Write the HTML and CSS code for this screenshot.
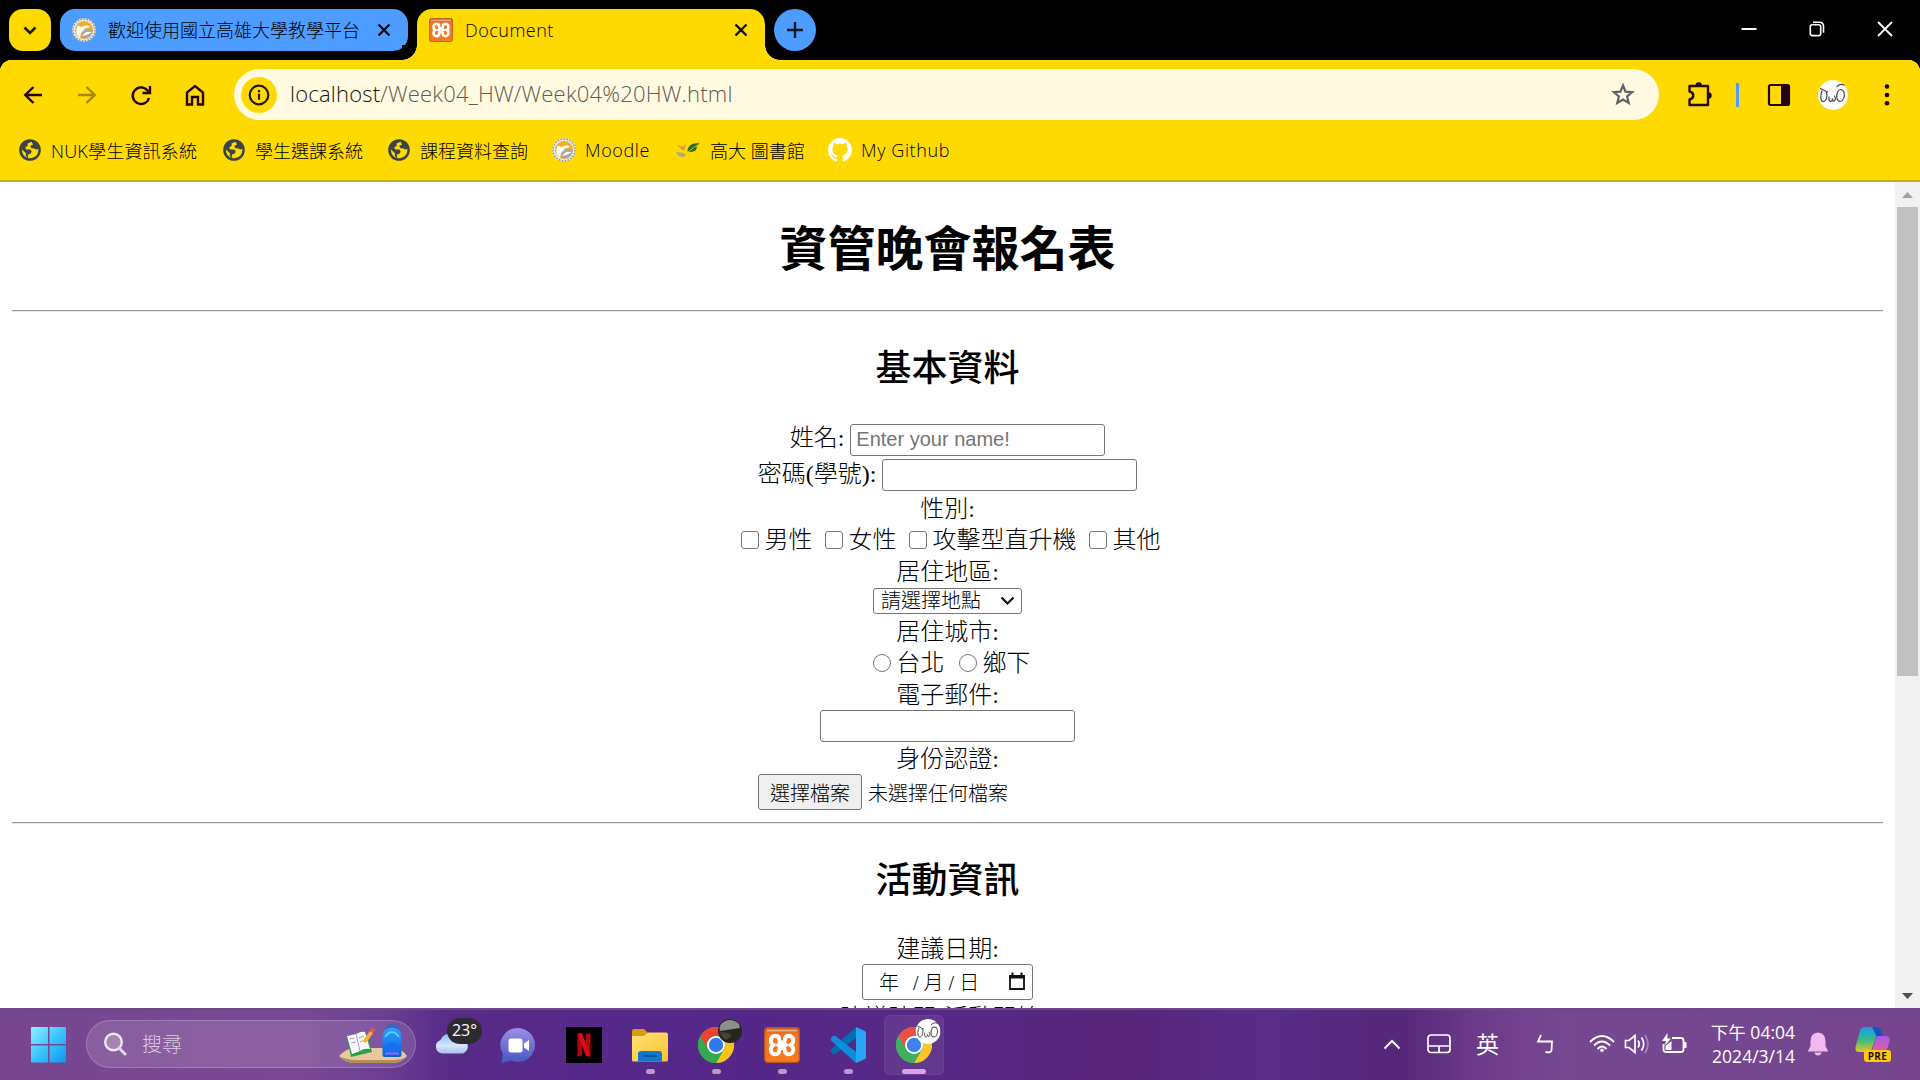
FILE: index.html
```html
<!DOCTYPE html>
<html lang="zh-Hant">
<head>
<meta charset="utf-8">
<title>Document</title>
<link rel="stylesheet" href="styles.css">
</head>
<body>
<svg class="defs" width="0" height="0">
  <defs>
    <linearGradient id="win" x1="0" y1="0" x2="1" y2="1"><stop offset="0" stop-color="#8ff0ff"/><stop offset=".5" stop-color="#3cc4fa"/><stop offset="1" stop-color="#0e95f5"/></linearGradient>
    <linearGradient id="fold" x1="0" y1="0" x2="1" y2="1"><stop offset="0" stop-color="#ffe27a"/><stop offset="1" stop-color="#fcc22c"/></linearGradient>
    <linearGradient id="cloud" x1="0" y1="0" x2="0" y2="1"><stop offset="0" stop-color="#8fbdf0"/><stop offset=".6" stop-color="#d4e6fb"/><stop offset="1" stop-color="#a5c3ee"/></linearGradient>
    <linearGradient id="chat" x1="0" y1="0" x2="0" y2="1"><stop offset="0" stop-color="#9a8fe6"/><stop offset="1" stop-color="#4556c4"/></linearGradient>
    <linearGradient id="orange" x1="0" y1="0" x2="0" y2="1"><stop offset="0" stop-color="#c65c1b"/><stop offset=".2" stop-color="#f37623"/><stop offset="1" stop-color="#f77a20"/></linearGradient>
    <linearGradient id="copA" x1="0" y1="0" x2="0" y2="1"><stop offset="0" stop-color="#1a9cf0"/><stop offset=".5" stop-color="#35b98a"/><stop offset="1" stop-color="#e6c81c"/></linearGradient>
    <linearGradient id="copB" x1="0" y1="0" x2="0" y2="1"><stop offset="0" stop-color="#a458f0"/><stop offset="1" stop-color="#f7607a"/></linearGradient>
    <linearGradient id="bag" x1="0" y1="0" x2="0" y2="1"><stop offset="0" stop-color="#2aa3ff"/><stop offset="1" stop-color="#0560d8"/></linearGradient>
    <symbol id="globe" viewBox="0 0 22 22"><circle cx="11" cy="11" r="10.8" fill="#3c4449"/><path d="M12.500 2.800l-4 1.700.3 2.300-2.500 1.500.8 2.200h4.300l1.300 2.200-1 1.800-3 1.200.5 3.300c4 1 8-1.300 9.700-5l.6-4-2.500.6-2-1.400-2.300.2-1.500-2.500 2.800-1.300z" fill="#ffda00"/><path d="M3 10.500l4 3.800-.3 2.500 2 2.200c-3.500-1-5.800-4.500-5.700-8.500z" fill="#ffda00"/></symbol>
    <symbol id="xampp" viewBox="0 0 36 36"><rect x=".7" y=".7" width="34.600" height="34.600" rx="3" fill="url(#orange)" stroke="#b75a22" stroke-width="1.300"/><path d="M3 2.500h30v2H3z" fill="#f5a875"/><path d="M14 18h8M10 18a4.500 4.500 0 0 1-3.200-4.500 4.400 4.400 0 0 1 4.400-4.700c3 0 4 2 4 4.200 0 1.500 1 2.500 2.800 2.500s2.800-1 2.800-2.500c0-2.200 1-4.200 4-4.200a4.400 4.400 0 0 1 4.400 4.700A4.500 4.500 0 0 1 26 18a4.500 4.500 0 0 1 3.200 4.500 4.400 4.400 0 0 1-4.400 4.700c-3 0-4-2-4-3.700 0-1.500-1-2.500-2.800-2.500s-2.800 1-2.800 2.500c0 1.700-1 3.700-4 3.700a4.400 4.400 0 0 1-4.400-4.700A4.500 4.500 0 0 1 10 18z" fill="none" stroke="#fff" stroke-width="3.900" stroke-linecap="round" stroke-linejoin="round"/></symbol>
    <symbol id="crest" viewBox="0 0 24 24"><circle cx="12" cy="12" r="11.800" fill="#e9e6df"/><circle cx="12" cy="12" r="11" fill="none" stroke="#909090" stroke-width="1.400" stroke-dasharray="1.500 1.500"/><circle cx="12" cy="12" r="9" fill="#f1ae28"/><path d="M6 7.500l3 1.500 6-2 3 2-5 1.500-4 4.500-1 5c-4-3-5-8-2-12.500z" fill="#fff"/><path d="M20.500 12c-3-2-8-1-10 2-1 2-1 3-.5 5.500 5 3 10-1 10.500-7.500z" fill="#a8a8a8"/><path d="M19.500 14.500c-4-2-7 0-9 3.500 3-.5 5-1.500 9-3.500z" fill="#fff"/></symbol>
    <symbol id="chrome" viewBox="0 0 36 36"><circle cx="18" cy="18" r="18" fill="#34a853"/><path d="M2.400 9A18 18 0 0 1 33.600 9H18a9 9 0 0 0-7.800 13.500z" fill="#ea4335"/><path d="M33.600 9A18 18 0 0 1 18 36l7.800-13.500A9 9 0 0 0 18 9z" fill="#fbc116"/><path d="M18 36A18 18 0 0 1 2.400 9l7.800 13.500A9 9 0 0 0 25.800 22.500z" fill="#34a853"/><circle cx="18" cy="18" r="9" fill="#fff"/><circle cx="18" cy="18" r="7.200" fill="#3079ee"/></symbol>
    <symbol id="face" viewBox="0 0 30 30"><circle cx="15" cy="15" r="15" fill="#fdfdfd"/><g fill="none" stroke="#444" stroke-width="1.200" stroke-linecap="round"><path d="M2.500 8.500l7 3.500M4 11c-2 5-1.500 10 1 10.500s5-4 3.500-9.500M11 17c-.5 3 .5 5 2 4.500s1.500-3 1.500-3 0 3 1.500 2.500 2-3 .5-5"/><ellipse cx="22.500" cy="15.500" rx="3.800" ry="6" transform="rotate(6 22.500 15.500)"/><path d="M19 6.500c2-2 5-2.500 7-1.500"/></g></symbol>
  </defs>
</svg>

<header class="tabstrip">
  <button class="tab-search"><svg width="42" height="42" viewBox="0 0 42 42"><path d="M15.500 18.500l5.500 5.500 5.500-5.500" fill="none" stroke="#241a00" stroke-width="2.600"/></svg></button>
  <div class="tab tab-idle">
    <svg width="24" height="24"><use href="#crest"/></svg>
    <span class="tab-title">歡迎使用國立高雄大學教學平台</span>
    <svg class="x" width="14" height="14" viewBox="0 0 14 14"><path d="M1.500 1.500l11 11m0-11l-11 11"/></svg>
  </div>
  <div class="tab tab-active">
    <svg width="24" height="24"><use href="#xampp"/></svg>
    <span class="tab-title">Document</span>
    <svg class="x" width="14" height="14" viewBox="0 0 14 14"><path d="M1.500 1.500l11 11m0-11l-11 11"/></svg>
  </div>
  <button class="new-tab"><svg width="42" height="42" viewBox="0 0 42 42"><path d="M21 13v16M13 21h16" stroke="#101820" stroke-width="2.400"/></svg></button>
  <div class="window-controls">
    <svg width="18" height="18" viewBox="0 0 18 18"><path d="M1.500 9h15" stroke="#fff" stroke-width="2"/></svg>
    <svg width="18" height="18" viewBox="0 0 18 18" fill="none" stroke="#fff" stroke-width="1.600"><rect x="2.300" y="4.800" width="10.400" height="10.800" rx="2"/><path d="M5 2.300h7a3.500 3.500 0 0 1 3.500 3.500v7"/></svg>
    <svg width="18" height="18" viewBox="0 0 18 18"><path d="M2 2l14 14m0-14L2 16" stroke="#fff" stroke-width="1.800"/></svg>
  </div>
</header>

<nav class="toolbar">
  <div class="nav-icons">
    <svg viewBox="0 0 24 24"><path d="M21 12H4m8.500-8L4.300 12l8.200 8"/></svg>
    <svg class="dim" viewBox="0 0 24 24"><path d="M3 12h17m-8.500-8l8.200 8-8.200 8"/></svg>
    <svg viewBox="0 0 24 24"><path d="M20 15a8.300 8.300 0 1 1-1.500-7.500l2 2M21 3v7h-7.500"/></svg>
    <svg viewBox="0 0 24 24"><path d="M4 21.500V9.500L12 3l8 6.500v12h-5v-7.500H9v7.500z"/></svg>
  </div>
  <div class="omnibox">
    <span class="site-info"><svg width="22" height="22" viewBox="0 0 22 22"><circle cx="11" cy="11" r="9.300" fill="none" stroke="#241a00" stroke-width="2.200"/><path d="M11 9.800v6M11 6v2.200" stroke="#241a00" stroke-width="2.200"/></svg></span>
    <span class="url"><b>localhost</b>/Week04_HW/Week04%20HW.html</span>
    <svg class="star" width="26" height="26" viewBox="0 0 26 26"><path d="M13 3.500l2.500 6.200 6.700.5-5.100 4.300 1.600 6.500L13 17.500 7.300 21l1.600-6.500-5.100-4.300 6.700-.5z" fill="none" stroke="#5f6368" stroke-width="2.200"/></svg>
  </div>
  <div class="actions">
    <svg class="puzzle" width="26" height="26" viewBox="0 0 26 26"><path d="M3.500 4h18.500v19H3.500v-5.500c5-1 5-7 0-8z" fill="none" stroke="#240a12" stroke-width="2.400" stroke-linejoin="round"/><path d="M9.500 3.500a3.200 3.200 0 0 1 6.400 0zM22.500 10.300a3.200 3.200 0 0 1 0 6.400z" fill="#240a12"/></svg>
    <i class="divider"></i>
    <svg class="panel" width="24" height="24" viewBox="0 0 24 24"><rect x="2" y="2" width="20" height="20" rx="1.500" fill="none" stroke="#240016" stroke-width="2.200"/><path d="M14 2h8v20h-8z" fill="#240016"/></svg>
    <svg class="profile" width="30" height="30"><use href="#face"/></svg>
    <svg class="more" width="8" height="24" viewBox="0 0 8 24"><circle cx="4" cy="3.500" r="2.300" fill="#240016"/><circle cx="4" cy="12" r="2.300" fill="#240016"/><circle cx="4" cy="20.300" r="2.300" fill="#240016"/></svg>
  </div>
</nav>

<nav class="bookmarks">
  <a class="bm w204"><svg width="22" height="22"><use href="#globe"/></svg><span class="nuk">NUK學生資訊系統</span></a>
  <a class="bm w165"><svg width="22" height="22"><use href="#globe"/></svg><span>學生選課系統</span></a>
  <a class="bm w164"><svg width="22" height="22"><use href="#globe"/></svg><span>課程資料查詢</span></a>
  <a class="bm w125"><svg width="24" height="24"><use href="#crest"/></svg><span class="latin">Moodle</span></a>
  <a class="bm w151"><svg width="24" height="24" viewBox="0 0 24 24"><path d="M23.500 5.500c-7-1-12 2-12 8 6 1.500 10-1 9-5z" fill="#2b6b12"/><path d="M22 6.500L12 14" stroke="#b5c43c"/><path d="M1 7l6 1.500L10 5l-1 6-2 2z" fill="#e0a030"/><path d="M0 14l8 1 2 2-3 2.500-5-2z" fill="#b8a878"/></svg><span>高大 圖書館</span></a>
  <a class="bm"><svg width="24" height="24" viewBox="0 0 16 16"><path fill="#fff" d="M8 0C3.580 0 0 3.580 0 8c0 3.540 2.290 6.530 5.470 7.590.4.070.55-.17.55-.38 0-.19-.01-.82-.01-1.490-2.010.37-2.530-.49-2.690-.94-.09-.23-.48-.94-.82-1.130-.28-.15-.68-.52-.01-.53.630-.01 1.080.58 1.230.82.720 1.210 1.870.87 2.330.66.070-.52.280-.87.510-1.070-1.780-.2-3.640-.89-3.640-3.950 0-.87.310-1.590.82-2.150-.08-.2-.36-1.020.08-2.120 0 0 .67-.21 2.200.82.640-.18 1.320-.27 2-.27s1.360.09 2 .27c1.530-1.040 2.200-.82 2.200-.82.440 1.100.16 1.920.08 2.120.51.560.82 1.270.82 2.150 0 3.070-1.870 3.750-3.650 3.950.29.250.54.730.54 1.480 0 1.070-.01 1.930-.01 2.200 0 .21.150.46.550.38A8.010 8.010 0 0 0 16 8c0-4.420-3.580-8-8-8z"/></svg><span class="latin">My Github</span></a>
</nav>

<div class="viewport">
  <main class="page">
    <h1>資管晚會報名表</h1>
    <hr>
    <h2>基本資料</h2>
    <div class="row name"><span>姓名:&nbsp;</span><input class="field" placeholder="Enter your name!"></div>
    <div class="row pass"><span>密碼(學號):&nbsp;</span><input class="field" type="password"></div>
    <div class="row sex-label">性別:</div>
    <div class="row checks">
      <label><input type="checkbox">男性</label>
      <label><input type="checkbox">女性</label>
      <label><input type="checkbox">攻擊型直升機</label>
      <label><input type="checkbox">其他</label>
    </div>
    <div class="row area-label">居住地區:</div>
    <div class="row"><div class="select"><span>請選擇地點</span><svg width="15" height="10" viewBox="0 0 15 10"><path d="M1.500 1.500l6 6 6-6" fill="none" stroke="#111" stroke-width="2.200"/></svg></div></div>
    <div class="row city-label">居住城市:</div>
    <div class="row radios">
      <label><input type="radio" name="city">台北</label>
      <label><input type="radio" name="city">鄉下</label>
    </div>
    <div class="row mail-label">電子郵件:</div>
    <div class="row"><input class="field" type="email"></div>
    <div class="row id-label">身份認證:</div>
    <div class="row file"><button>選擇檔案</button><span>未選擇任何檔案</span></div>
    <hr>
    <h2>活動資訊</h2>
    <div class="row date-label">建議日期:</div>
    <div class="row"><div class="date"><span class="yy">年</span><span>/</span><span>月</span><span>/</span><span>日</span><svg width="18" height="19" viewBox="0 0 18 19"><path d="M2 4h14v13H2z" fill="none" stroke="#111" stroke-width="1.800"/><path d="M1 3h16v3.500H1zM3.500.5h2v3h-2zM12.500.5h2v3h-2z" fill="#111"/></svg></div></div>
    <div class="row time-label">建議時間(活動開始):</div>
  </main>
  <aside class="scrollbar">
    <svg width="11" height="6" viewBox="0 0 11 6"><path d="M0 6L5.500 0 11 6z" fill="#a3a3a3"/></svg>
    <i class="thumb"></i>
    <svg class="down" width="11" height="6" viewBox="0 0 11 6"><path d="M0 0l5.500 6L11 0z" fill="#505050"/></svg>
  </aside>
</div>

<footer class="taskbar">
  <svg class="start" width="36" height="36" viewBox="0 0 36 36"><path d="M0 1q0-1 1-1h16v17H0zM18.500 0H34q1 0 1 1v16H18.500zM0 18.500h17v17H1q-1 0-1-1zM18.500 18.500H35v16q0 1-1 1H18.500z" fill="url(#win)"/></svg>
  <div class="search">
    <svg width="24" height="24" viewBox="0 0 24 24"><circle cx="10.500" cy="10" r="8.300" fill="#a585b5" stroke="#efe6f4" stroke-width="2.400"/><path d="M16.500 16.500l5.500 5.500" stroke="#e3d6ea" stroke-width="3" stroke-linecap="round"/></svg>
    <span>搜尋</span>
    <svg class="art" width="68" height="40" viewBox="0 0 68 40"><path d="M0 32q8-8 15-8h40q7 0 13 8-6 7-14 7H15q-8 0-15-7z" fill="#e9c89a"/><path d="M2 33q8 3 14 3h38q8 0 13-3-6 6-14 6H15q-8 0-13-6z" fill="#b58d5c"/><path d="M8 14l20-4 5 18-21 5z" fill="#2e9e4d"/><path d="M8 12l9-2 4 17-8 3zM17 10q5-3 9-2l5 17q-6-1-10 2z" fill="#fbf8fd"/><path d="M17 10l4 17M10.500 15l5-1M12 19l5-1M20 14l5-2M21 18l5-2" stroke="#a9a0b8" fill="none"/><path d="M25 15l6-8 3 2-6 9-3 1z" fill="#f9b233"/><path d="M30.500 7l2.500-3 3.500 2-2.500 3z" fill="#f0563d"/><path d="M48 6q0-5 5-5t5 5" fill="none" stroke="#1573dd" stroke-width="2"/><path d="M43.500 13q0-9 9.500-9t9.500 9v18q0 2-2 2h-15q-2 0-2-2z" fill="url(#bag)"/><path d="M46 13q7-10 14 0" fill="none" stroke="#6cd0ff" stroke-width="1.300"/><path d="M46 25q0-6 7-6t7 6v6H46z" fill="#1b6ef0"/><path d="M46 28.500h14v2H46z" fill="#9a63f5"/></svg>
  </div>
  <div class="apps">
    <div class="app weather"><svg width="38" height="24" viewBox="0 0 38 24"><path d="M9 22.500a7 7 0 0 1-1.500-13.500A11 11 0 0 1 27 8a7.500 7.500 0 0 1 3 14.500z" fill="url(#cloud)"/></svg><b>23°</b></div>
    <div class="app"><svg width="36" height="36" viewBox="0 0 36 36"><path d="M18 1a17 17 0 1 1-7 32.500L1.500 36l1.500-9A17 17 0 0 1 18 1z" fill="url(#chat)"/><rect x="8.500" y="11.500" width="14" height="14" rx="2.500" fill="#fff"/><path d="M24 16.500l5-3.500v11l-5-3.500z" fill="#fff"/></svg></div>
    <div class="app"><svg width="36" height="36" viewBox="0 0 36 36"><path d="M0 0h36v36H0z"/><path d="M11.500 6.500h4.500V29l-4.500.6zM20 6.500h4.500v23L20 29z" fill="#b1060f"/><path d="M11.500 6.500H16l8.500 23-4.500-.6z" fill="#e50914"/></svg></div>
    <div class="app run"><svg width="36" height="36" viewBox="0 0 36 36"><path d="M0 4q0-2 2-2h10l4 4h-1v6H0z" fill="#d99a0c"/><path d="M0 9h12l4-3.500h18q2 0 2 2V33q0 1.500-1.500 1.500h-33Q0 34.500 0 33z" fill="url(#fold)"/><path d="M6 34.500V27q0-3 3-3h18q3 0 3 3v7.500z" fill="#1178d0"/><path d="M11 29h14" stroke="#0a4d91" stroke-width="1.500"/></svg></div>
    <div class="app run"><svg width="36" height="36"><use href="#chrome"/></svg><svg class="avatar" width="24" height="24" viewBox="0 0 24 24"><circle cx="12" cy="12" r="12" fill="#26261f"/><path d="M3 5Q12-3 21 5l1 4-7 1-6 1-7 1q-1-3 1-7z" fill="#8b918a"/><path d="M2 13l9 1 3 3-6 4q-5-3-6-8z" fill="#454233"/></svg></div>
    <div class="app run"><svg width="36" height="36"><use href="#xampp"/></svg></div>
    <div class="app run"><svg width="36" height="36" viewBox="0 0 36 36"><path d="M26 0L1 22.500q-1 1.300 0 2.600l2 1.900q1 .8 2.300 0L26 11z" fill="#0070b5"/><path d="M26 36L1 13.500q-1-1.300 0-2.600L3 9q1-.8 2.300 0L26 25z" fill="#0b8fdc"/><path d="M26 0l9 4q1 .5 1 1.700v24.600q0 1.200-1 1.700l-9 4z" fill="#27a5f3"/></svg></div>
    <div class="app run active"><svg width="36" height="36"><use href="#chrome"/></svg><svg class="avatar" width="26" height="25" viewBox="0 0 30 30"><use href="#face"/></svg></div>
  </div>
  <div class="tray">
    <svg class="t-chev" width="18" height="12" viewBox="0 0 18 12"><path d="M1.500 10.500L9 3l7.500 7.500" fill="none" stroke="#fff" stroke-width="2"/></svg>
    <svg class="t-pad" width="24" height="20" viewBox="0 0 24 20" fill="none" stroke="#fff" stroke-width="1.700"><rect x="1" y="1" width="22" height="17.500" rx="3"/><path d="M1 12h22M12 12v6.500"/></svg>
    <span class="t-ime">英</span>
    <svg class="t-bo" width="18" height="20" viewBox="0 0 18 20"><path d="M5 1L2 7.500h14l-.5 9q-.3 2.500-6 1.500" fill="none" stroke="#fff" stroke-width="1.800"/></svg>
    <svg class="t-wifi" width="26" height="20" viewBox="0 0 26 20" fill="none" stroke="#fff" stroke-width="1.900"><path d="M1 8q12-12 24 0M5 11.500q8-8 16 0M8.500 15q4.500-5 9 0"/><circle cx="13" cy="16.300" r="1.800" fill="#fff" stroke="none"/></svg>
    <svg class="t-vol" width="26" height="22" viewBox="0 0 26 22" fill="none" stroke="#fff" stroke-width="1.700"><path d="M1.500 7.500H5L11 2.500v17L5 14.500H1.500zM14 7.500q2.500 3.500 0 7M17.500 4.500q4.500 6.500 0 13"/><path d="M21 2q6 9 0 18" stroke="#a584b8"/></svg>
    <svg class="t-bat" width="26" height="22" viewBox="0 0 26 22"><path d="M11 5h9q2.500 0 2.500 2.500v9q0 2.500-2.500 2.500H5q-2.500 0-2.500-2.500V11" fill="none" stroke="#fff" stroke-width="1.800"/><path d="M23 9h1.500q1 0 1 1v4q0 1-1 1H23zM6.500 0L1 8h4l-1.500 5L10 5.500H6.500zM4.500 17v-4l6-5v9z" fill="#fff"/></svg>
    <div class="clock"><span class="c1">下午 04:04</span><span class="c2">2024/3/14</span></div>
    <svg class="t-bell" width="22" height="24" viewBox="0 0 22 24"><path d="M11 .5q7.500.5 7.500 8.500v5l2.500 5v.5H1V19l2.500-5V9Q3.500 1 11 .5zM7 20.500h8q-1.500 3-4 3t-4-3z" fill="#f3b8f0"/></svg>
    <div class="copilot"><svg width="36" height="30" viewBox="0 0 36 30"><path d="M10 1h12q3 0 2 3l-7 18q-1 4-5 4H4q-5 0-3-7L5 5q1-4 5-4z" fill="url(#copA)"/><path d="M17 1h5q3 0 4 4l2 5-6 1z" fill="#1450c8"/><path d="M22 10h9q5 0 3.500 6L31 26q-1 4-5 4H15z" fill="url(#copB)"/></svg><b>PRE</b></div>
  </div>
</footer>
</body>
</html>
```
FILE: styles.css
```css
* { box-sizing: border-box; }
body {
  margin: 0; width: 1920px; height: 1080px; overflow: hidden;
  display: flex; flex-direction: column; background: #fff; color: #000;
  font-family: "Open Sans", "Noto Sans CJK TC", sans-serif; font-weight: 300;
}
svg { display: block; flex: none; }
.defs { position: absolute; }
button { border: 0; padding: 0; font: inherit; color: inherit; }

.tabstrip { height: 60px; flex: none; background: #000; display: flex; padding: 9px 26px 0 9px; }
.tab-search { width: 42px; height: 42px; border-radius: 14px; background: #ffda00; margin-right: 9px; }
.tab { width: 348px; display: flex; align-items: center; padding: 0 17px 0 12px; font-size: 18px; }
.tab-title { margin-left: 12px; flex: 1; white-space: nowrap; line-height: 42px; }
.tab .x { stroke: #0c0c0c; stroke-width: 2.4; }
.tab-idle { height: 42px; border-radius: 15px; background: #4c9dff; margin-right: 9px; }
.tab-active { height: 51px; padding-bottom: 9px; border-radius: 15px 15px 0 0; background: #ffda00; position: relative; }
.tab-active .tab-title { letter-spacing: .5px; }
.tab-active::before, .tab-active::after { content: ""; position: absolute; bottom: 0; width: 15px; height: 15px; }
.tab-active::before { left: -15px; background: radial-gradient(circle at 0 0, #000 14.500px, #ffda00 15px); }
.tab-active::after { right: -15px; background: radial-gradient(circle at 100% 0, #000 14.500px, #ffda00 15px); }
.new-tab { width: 42px; height: 42px; border-radius: 50%; background: #4c9dff; margin-left: 9px; }
.window-controls { margin-left: auto; display: flex; gap: 50px; padding-top: 11px; }

.toolbar { height: 69px; flex: none; display: flex; align-items: center; padding: 0 29px 0 21px; background: radial-gradient(circle at 12px 12px, #ffda00 12px, #000 12.500px) 0 0 / 12px 12px no-repeat, radial-gradient(circle at 0 12px, #ffda00 12px, #000 12.500px) 100% 0 / 12px 12px no-repeat, #ffda00; }
.nav-icons { display: flex; gap: 30px; width: 213px; }
.nav-icons svg { width: 24px; height: 24px; fill: none; stroke: #240016; stroke-width: 2.400; }
.nav-icons .dim { stroke: #a98600; }
.omnibox { width: 1425px; height: 51px; border-radius: 26px; background: #fffae0; display: flex; align-items: center; padding: 0 23px 0 7px; }
.site-info { width: 36px; height: 36px; border-radius: 50%; background: #ffda00; display: flex; align-items: center; justify-content: center; }
.url { flex: 1; margin-left: 13px; padding-bottom: 3px; font-size: 22px; letter-spacing: .2px; color: #5c5b55; font-weight: 300; }
.url b { font-weight: 300; color: #161610; }
.actions { flex: 1; display: flex; align-items: center; padding: 0 0 0 27px; }
.divider { width: 3px; height: 24px; background: #4c9dff; margin-left: 24px; }
.panel { margin-left: 28px; } .profile { margin-left: 27px; } .more { margin-left: 35px; }

.bookmarks { height: 53px; flex: none; display: flex; align-items: center; padding: 0 19px 9px; background: #ffda00; border-bottom: 2px solid #d0ad0a; font-size: 18px; }
.bm { display: flex; align-items: center; gap: 10px; white-space: nowrap; }
.latin { margin-left: -1px; letter-spacing: .6px; } .nuk { letter-spacing: .2px; }
.w204 { width: 204px; } .w165 { width: 165px; } .w164 { width: 164px; } .w125 { width: 124px; } .w151 { width: 152px; }

.viewport { flex: 1; min-height: 0; display: flex; overflow: hidden; }
.page { flex: 1; padding: 0 12px; font: 300 24px/28px "Liberation Serif", "Noto Sans CJK TC", serif; overflow: hidden; }
h1 { margin: 0; height: 128px; padding-top: 6px; font-size: 48px; line-height: 124px; text-align: center; font-weight: 700; }
h2 { margin: 0; height: 110px; padding-top: 3px; font-size: 36px; line-height: 108px; text-align: center; font-weight: 500; }
hr { margin: 0; border: 0; height: 2px; background: linear-gradient(#9a9a9a 50%, #e8e8e8 50%); }
.row { display: flex; justify-content: center; align-items: center; white-space: nowrap; }
.name { height: 36px; } .pass { height: 34px; } .sex-label { height: 32px; padding-top: 1px; } .checks { height: 31px; }
.name span { padding-bottom: 4px; } .pass span { padding-bottom: 2px; }
.area-label { height: 33px; padding-top: 1px; } .city-label { height: 34px; padding-top: 1px; } .radios { height: 30px; padding-bottom: 1px; }
.mail-label, .id-label { height: 32px; padding-top: 2px; } .date-label { height: 30px; } .time-label { height: 36px; }
.field { width: 255px; height: 32px; border: 1px solid #767676; border-radius: 3px; padding: 0 5px 2px; font: 400 20px "Liberation Sans", sans-serif; background: #fff; }
.field::placeholder { color: #757575; }
.row label { display: flex; align-items: center; }
.checks { gap: 12px; padding-left: 6px; } .radios { gap: 14px; padding-left: 8px; }
.row label input { appearance: none; width: 18px; height: 18px; margin: 0 6px 0 0; border: 1.500px solid #767676; border-radius: 3px; background: #fff; }
.row label input[type=radio] { border-radius: 50%; }
.select { width: 149px; height: 26px; border: 1px solid #767676; border-radius: 3px; display: flex; align-items: center; justify-content: space-between; padding: 0 6px 0 7px; font-size: 20px; }
.file { height: 36px; width: 379px; margin: 0 auto 12px; justify-content: flex-start; font-size: 20px; }
.file button { width: 104px; height: 36px; padding-top: 3px; border: 1px solid #767676; border-radius: 3px; background: #efefef; margin-right: 6px; }
.file span { padding-top: 3px; }
.date { width: 171px; height: 36px; border: 1px solid #767676; border-radius: 3px; display: flex; align-items: center; padding: 1px 6px 0 16px; font-size: 20px; gap: 5px; }
.date .yy { margin-right: 9px; } .date svg { margin-left: auto; margin-bottom: 2px; }
.scrollbar { width: 25px; background: #f1f1f1; display: flex; flex-direction: column; align-items: center; padding: 10px 0 9px; }
.thumb { width: 21px; height: 469px; background: #c1c1c1; margin-top: 9px; }
.down { margin-top: auto; }

.taskbar { height: 72px; flex: none; display: flex; align-items: center; border-top: 2px solid #6d4a86; color: #fff; padding-left: 31px;
  background: linear-gradient(90deg, #764690 0, #7a4995 300px, #6c3f93 380px, #572c87 450px, #57298a 560px, #552788 760px, #572a86 960px, #58267a 1110px, #582d88 1270px, #562879 1400px, #6a3988 1470px, #774892 1560px, #75458f 1920px); }
.start { margin-right: 19px; }
.search { width: 330px; height: 48px; margin-bottom: 2px; border-radius: 24px; background: rgba(255,255,255,.13); border: 1.500px solid rgba(255,255,255,.18); display: flex; align-items: center; padding: 0 8px 0 16px; font-size: 20px; color: #d9c9e2; }
.search span { margin-left: 15px; flex: 1; padding-bottom: 2px; }
.apps { display: flex; margin-left: 3px; }
.app { width: 66px; height: 60px; display: flex; align-items: center; justify-content: center; position: relative; }
.app.run::after { content: ""; position: absolute; bottom: 1px; left: 28.500px; width: 9px; height: 5px; border-radius: 3px; background: #b69bcb; }
.app.active::before { content: ""; position: absolute; inset: 0 3px; border-radius: 6px; background: rgba(255,255,255,.07); border: 1px solid rgba(255,255,255,.06); }
.app.active::after { left: 21px; width: 24px; background: #dfa0e6; }
.avatar { position: absolute; left: 35px; top: 4px; }
.active .avatar { left: 34px; }
.weather { padding-bottom: 4px; }
.weather b { position: absolute; left: 28px; top: 3px; width: 35px; height: 26px; border-radius: 13px; background: #2c2c30; font: 400 16px/25px "Open Sans", sans-serif; text-align: center; }
.tray { margin-left: auto; width: 537px; display: flex; align-items: center; padding-bottom: 3px; }
.t-pad { margin-left: 26px; } .t-ime { margin-left: 25px; font-size: 23px; line-height: 30px; font-weight: 400; width: 23px; }
.t-bo { margin-left: 37px; } .t-wifi { margin-left: 35px; } .t-vol { margin-left: 9px; } .t-bat { margin-left: 11px; }
.clock { width: 108px; display: flex; flex-direction: column; align-items: flex-end; font-size: 17.500px; line-height: 24px; font-weight: 400; white-space: nowrap; }
.t-bell { margin-left: 12px; }
.copilot { position: relative; margin-left: 26px; height: 36px; }
.copilot b { position: absolute; left: 9px; top: 24px; width: 27px; height: 12px; border-radius: 3px; background: #ffc90e; color: #1b1400; font: 700 10px/12px "Open Sans", sans-serif; text-align: center; letter-spacing: .4px; }
```
